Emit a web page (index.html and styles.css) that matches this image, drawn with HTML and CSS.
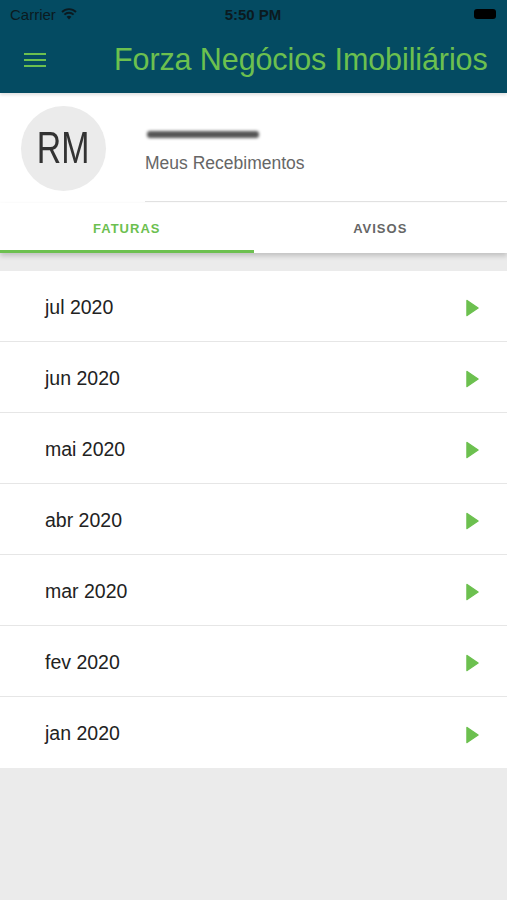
FILE: index.html
```html
<!DOCTYPE html>
<html lang="pt">
<head>
    <meta charset="UTF-8">
    <meta name="viewport" content="width=device-width, initial-scale=1.0">
    <title>Forza Negócios Imobiliários</title>
    <link rel="stylesheet" href="styles.css">
</head>
<body>
    <div class="topbar">
        <div class="status">
            <div class="carrier">
                Carrier
                <svg width="16" height="12" viewBox="0 0 16 12">
                    <path d="M8 11.5 L5.6 8.8 A3.6 3.6 0 0 1 10.4 8.8 Z" fill="#0b1a20"/>
                    <path d="M3.4 6.6 A6.6 6.6 0 0 1 12.6 6.6" stroke="#0b1a20" stroke-width="1.9" fill="none"/>
                    <path d="M1 4 A10 10 0 0 1 15 4" stroke="#0b1a20" stroke-width="1.9" fill="none"/>
                </svg>
            </div>
            <div class="time">5:50 PM</div>
            <div class="battery"></div>
        </div>
        <div class="navbar">
            <svg class="menu" width="22" height="16" viewBox="0 0 22 16">
                <rect x="0" y="1" width="22" height="2" fill="#6cc04f"/>
                <rect x="0" y="7" width="22" height="2" fill="#6cc04f"/>
                <rect x="0" y="13" width="22" height="2" fill="#6cc04f"/>
            </svg>
            <h1>Forza Negócios Imobiliários</h1>
        </div>
    </div>

    <div class="profile">
        <div class="avatar"><span>RM</span></div>
        <div class="info">
            <div class="name-blur"></div>
            <div class="subtitle">Meus Recebimentos</div>
        </div>
    </div>

    <div class="tabs">
        <div class="tab active">FATURAS</div>
        <div class="tab">AVISOS</div>
    </div>

    <div class="list" id="list"></div>

    <script>
        const months = ['jul 2020', 'jun 2020', 'mai 2020', 'abr 2020', 'mar 2020', 'fev 2020', 'jan 2020'];
        const list = document.getElementById('list');
        months.forEach(m => {
            const row = document.createElement('div');
            row.className = 'row';
            row.innerHTML = `<span>${m}</span>
                <svg width="13" height="18" viewBox="0 0 13 18"><path d="M1 1.5 L12 9 L1 16.5 Z" fill="#6cc04f" stroke="#6cc04f" stroke-width="1.5" stroke-linejoin="round"/></svg>`;
            list.appendChild(row);
        });
    </script>
</body>
</html>
```

FILE: styles.css
```css
body {
    margin: 0;
    padding: 0;
    width: 507px;
    height: 900px;
    background-color: #ebebeb;
    font-family: 'Liberation Sans', Arial, sans-serif;
    overflow: hidden;
}
.topbar {
    background-color: #044b62;
    height: 93px;
    box-shadow: 0 2px 3px rgba(0, 0, 0, 0.12);
    position: relative;
    z-index: 2;
}
.status {
    height: 28px;
    display: flex;
    align-items: center;
    justify-content: space-between;
    padding: 0 11px 0 10px;
    color: #0b1a20;
    font-size: 15px;
}
.carrier {
    display: flex;
    align-items: center;
    gap: 5px;
    width: 90px;
}
.time {
    font-weight: bold;
    font-size: 15px;
}
.battery {
    width: 22px;
    height: 10px;
    background-color: #000;
    border-radius: 3px;
    margin-left: 68px;
}
.navbar {
    height: 65px;
    display: flex;
    align-items: center;
    padding-left: 24px;
}
.menu {
    margin-top: -2px;
}
.navbar h1 {
    margin: 0 0 2px 68px;
    font-size: 30.5px;
    font-weight: normal;
    color: #6cc04f;
    white-space: nowrap;
    letter-spacing: -0.1px;
}
.profile {
    background-color: #fff;
    display: flex;
    align-items: flex-start;
    padding: 13px 0 0 21px;
    height: 110px;
    box-sizing: border-box;
}
.avatar {
    width: 85px;
    height: 85px;
    border-radius: 50%;
    background-color: #ebebeb;
    color: #333;
    font-size: 44px;
    display: flex;
    align-items: center;
    justify-content: center;
    flex-shrink: 0;
}
.avatar span {
    display: inline-block;
    transform: scaleX(0.77);
    margin-top: -1px;
}
.info {
    flex: 1;
    margin-left: 39px;
    padding-top: 21px;
    border-bottom: 1px solid #e2e2e2;
    height: 96px;
    box-sizing: border-box;
}
.name-blur {
    width: 112px;
    height: 7px;
    background-color: #555;
    border-radius: 3px;
    filter: blur(1.6px);
    margin-top: 4px;
    margin-left: 2px;
}
.subtitle {
    margin-top: 15px;
    font-size: 17.5px;
    color: #666;
}
.tabs {
    background-color: #fff;
    display: flex;
    height: 50px;
    box-shadow: 0 3px 5px rgba(0, 0, 0, 0.18);
    position: relative;
    z-index: 1;
    margin-bottom: 18px;
}
.tab {
    flex: 1;
    text-align: center;
    font-size: 13px;
    font-weight: bold;
    letter-spacing: 1px;
    color: #666;
    padding-top: 18px;
    box-sizing: border-box;
}
.tab.active {
    color: #6cc04f;
    border-bottom: 3px solid #6cc04f;
}
.list {
    background-color: #fff;
}
.row {
    height: 71px;
    display: flex;
    align-items: center;
    justify-content: space-between;
    padding: 0 28px 0 45px;
    border-bottom: 1px solid #e6e6e6;
    box-sizing: border-box;
    font-size: 19.5px;
    color: #222;
}
.row:last-child {
    border-bottom: none;
}
.row span {
    margin-top: 2px;
}
.row svg {
    margin-top: 4px;
}
```
